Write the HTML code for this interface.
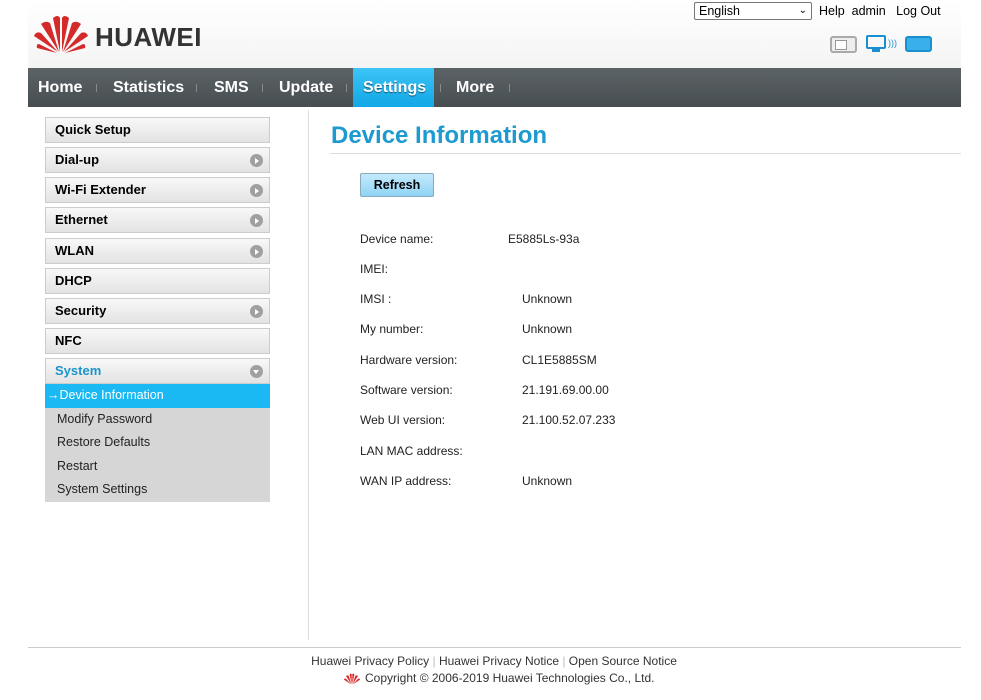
<!DOCTYPE html>
<html><head><meta charset="utf-8"><style>
*{margin:0;padding:0;box-sizing:border-box}
body{width:981px;height:700px;background:#fff;font-family:"Liberation Sans",Arial,sans-serif;position:relative;overflow:hidden;color:#000}
.abs{position:absolute}
.top{left:28px;top:0;width:933px;height:68px;background:linear-gradient(#fff,#f4f4f4)}
.nav{left:28px;top:68px;width:933px;height:39px;background:linear-gradient(#5c6366,#474e51)}
.nav span{position:absolute;top:0;height:39px;line-height:39px;color:#fff;font-weight:bold;font-size:16px}
.sep{position:absolute;top:16px;width:1px;height:8px;background:#888}
.mi{position:absolute;left:45px;width:225px;height:26px;border:1px solid #ccc;background:linear-gradient(#f8f8f8,#e3e3e3);font-weight:bold;font-size:13px;line-height:24px;padding-left:9px}
.mi i{position:absolute;right:6px;top:6px;width:13px;height:13px;border-radius:50%;background:#a0a0a0}
.mi i:after{content:"";position:absolute;left:5px;top:3.5px;border-left:4px solid #fff;border-top:3px solid transparent;border-bottom:3px solid transparent}
.sub{position:absolute;left:45px;width:225px;height:23.5px;font-size:12.5px;line-height:23px;padding-left:12px;background:#d6d6d6;color:#222}
.row{position:absolute;font-size:12px;color:#222}
</style></head><body>
<div class="abs top"></div>
<svg class="abs" style="left:33px;top:14px" width="56" height="40" viewBox="0 0 56 40">
<g fill="#d42a2a">
<path d="M27 38 L20 4 Q25 0 27 4 Z"/><path d="M29 38 L36 4 Q31 0 29 4 Z"/>
<path d="M26 38 L8 10 Q13 6 17 9 Z"/><path d="M30 38 L48 10 Q43 6 39 9 Z"/>
<path d="M25 38 L1 22 Q3 17 8 19 Z"/><path d="M31 38 L55 22 Q53 17 48 19 Z"/>
<path d="M24 39 L4 34 Q3 30 6 30 Z"/><path d="M32 39 L52 34 Q53 30 50 30 Z"/>
</g></svg>
<div class="abs" style="left:95px;top:22px;font-size:26px;font-weight:bold;color:#333;letter-spacing:0.5px">HUAWEI</div>
<div class="abs" style="left:694px;top:2px;width:118px;height:18px;border:1px solid #777;border-radius:2px;font-size:12.5px;line-height:16px;padding-left:4px;background:#fff">English<span style="position:absolute;right:4px;top:0;font-size:10px">&#8964;</span></div>
<div class="abs" style="left:819px;top:4px;font-size:12.5px">Help&nbsp; admin&nbsp;&nbsp; Log Out</div>
<div class="abs" style="left:830px;top:36px;width:27px;height:17px;border:2px solid #aaa;border-radius:3px;background:#eee"><div style="position:absolute;left:3px;top:2px;width:12px;height:10px;border:1px solid #999;background:#fff"></div></div>
<div class="abs" style="left:866px;top:35px;width:20px;height:14px;border:2px solid #1a8fd0;border-radius:2px"></div>
<div class="abs" style="left:872px;top:49px;width:8px;height:3px;background:#1a8fd0"></div>
<div class="abs" style="left:888px;top:38px;font-size:9px;color:#1a8fd0">)))</div>
<div class="abs" style="left:905px;top:36px;width:27px;height:16px;border:2px solid #1a8fd0;border-radius:3px;background:#3ab0ea"></div>
<div class="abs nav">
<span style="left:10px">Home</span><div class="sep" style="left:68px"></div>
<span style="left:85px">Statistics</span><div class="sep" style="left:168px"></div>
<span style="left:186px">SMS</span><div class="sep" style="left:234px"></div>
<span style="left:251px">Update</span><div class="sep" style="left:318px"></div>
<div style="position:absolute;left:325px;top:0;width:81px;height:39px;background:linear-gradient(#3cc4f5,#12a7e6)"></div>
<span style="left:335px;text-shadow:0 1px 1px #157">Settings</span><div class="sep" style="left:412px"></div>
<span style="left:428px">More</span><div class="sep" style="left:481px"></div>
</div>
<div class="mi" style="top:117px">Quick Setup</div>
<div class="mi" style="top:147px">Dial-up<i></i></div>
<div class="mi" style="top:177px">Wi-Fi Extender<i></i></div>
<div class="mi" style="top:207px">Ethernet<i></i></div>
<div class="mi" style="top:238px">WLAN<i></i></div>
<div class="mi" style="top:268px">DHCP</div>
<div class="mi" style="top:298px">Security<i></i></div>
<div class="mi" style="top:328px">NFC</div>
<div class="mi" style="top:358px;color:#1b95c9">System<i style="transform:rotate(90deg)"></i></div>
<div class="sub" style="top:384px;background:#1ab9f3;color:#fff;padding-left:2px">&#8594;Device Information</div>
<div class="sub" style="top:407.5px">Modify Password</div>
<div class="sub" style="top:431px">Restore Defaults</div>
<div class="sub" style="top:454.5px">Restart</div>
<div class="sub" style="top:478px">System Settings</div>
<div class="abs" style="left:308px;top:110px;width:1px;height:530px;background:#ddd"></div>
<div class="abs" style="left:331px;top:122px;font-size:24px;font-weight:bold;color:#1d9ad0">Device Information</div>
<div class="abs" style="left:330px;top:153px;width:631px;height:1px;background:#ddd"></div>
<div class="abs" style="left:360px;top:173px;width:74px;height:24px;border:1px solid #8ab;border-radius:2px;background:linear-gradient(#c4eafc,#8fd3f5);font-size:12.5px;font-weight:bold;text-align:center;line-height:22px">Refresh</div>
<div class="row" style="left:360px;top:232px">Device name:</div><div class="row" style="left:508px;top:232px">E5885Ls-93a</div>
<div class="row" style="left:360px;top:262px">IMEI:</div>
<div class="row" style="left:360px;top:292px">IMSI :</div><div class="row" style="left:522px;top:292px">Unknown</div>
<div class="row" style="left:360px;top:322px">My number:</div><div class="row" style="left:522px;top:322px">Unknown</div>
<div class="row" style="left:360px;top:353px">Hardware version:</div><div class="row" style="left:522px;top:353px">CL1E5885SM</div>
<div class="row" style="left:360px;top:383px">Software version:</div><div class="row" style="left:522px;top:383px">21.191.69.00.00</div>
<div class="row" style="left:360px;top:413px">Web UI version:</div><div class="row" style="left:522px;top:413px">21.100.52.07.233</div>
<div class="row" style="left:360px;top:444px">LAN MAC address:</div>
<div class="row" style="left:360px;top:474px">WAN IP address:</div><div class="row" style="left:522px;top:474px">Unknown</div>
<div class="abs" style="left:28px;top:647px;width:933px;height:1px;background:#ccc"></div>
<div class="abs" style="left:0;top:654px;width:981px;text-align:center;font-size:12px;color:#333;padding-left:7px">Huawei Privacy Policy <span style="color:#bbb">|</span> Huawei Privacy Notice <span style="color:#bbb">|</span> Open Source Notice</div>
<div class="abs" style="left:343px;top:672px;width:18px;height:12px"><svg width="18" height="12" viewBox="0 0 56 40"><g fill="#d42a2a"><path d="M27 38 L20 4 Q25 0 27 4 Z"/><path d="M29 38 L36 4 Q31 0 29 4 Z"/><path d="M26 38 L8 10 Q13 6 17 9 Z"/><path d="M30 38 L48 10 Q43 6 39 9 Z"/><path d="M25 38 L1 22 Q3 17 8 19 Z"/><path d="M31 38 L55 22 Q53 17 48 19 Z"/></g></svg></div>
<div class="abs" style="left:365px;top:671px;font-size:12px;color:#333">Copyright © 2006-2019 Huawei Technologies Co., Ltd.</div>
</body></html>
